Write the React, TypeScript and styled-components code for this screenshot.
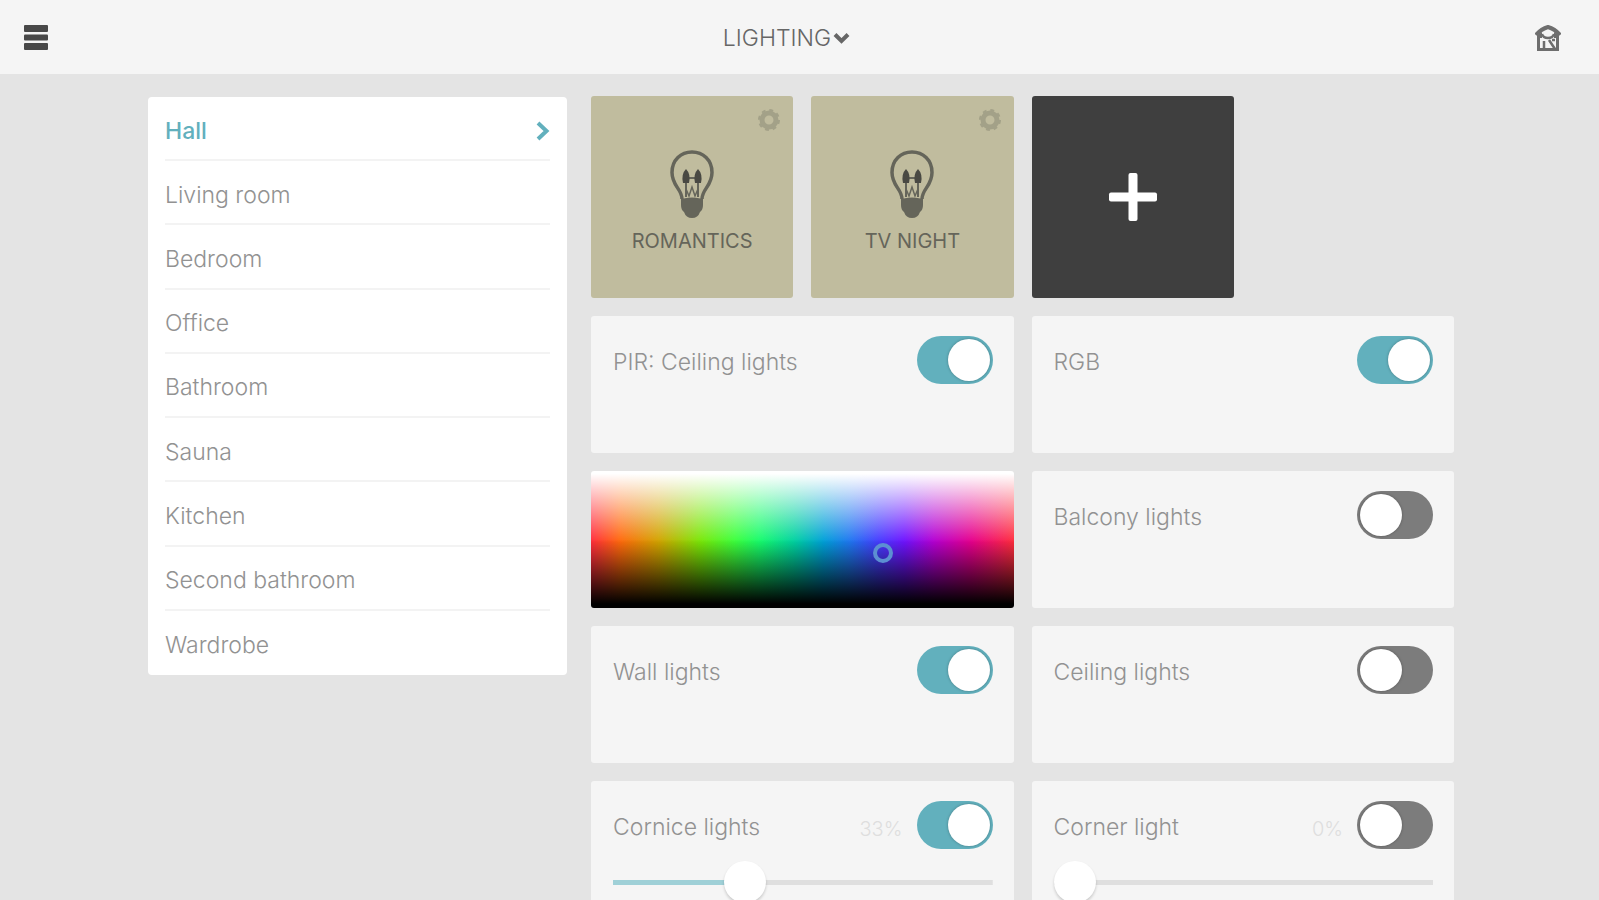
import React, { useState } from "react";
import styled, { createGlobalStyle } from "styled-components";

const GlobalStyle = createGlobalStyle`
  *, *::before, *::after { box-sizing: border-box; }
  body {
    margin: 0;
    background: #e4e4e4;
    color: #929292;
    font: 300 23px/28px Inter, "Liberation Sans", sans-serif;
  }
  button, input { font: inherit; color: inherit; }
`;

const Header = styled.header`
  display: grid;
  grid-template-columns: 1fr auto 1fr;
  align-items: center;
  height: 74px;
  padding: 2px 38px 0 24px;
  background: #f5f5f5;
  color: #555;
`;

const PlainButton = styled.button`
  display: flex;
  align-items: center;
  gap: 2px;
  padding: 0;
  border: 0;
  background: none;
  cursor: pointer;

  svg { display: block; }
`;

const HomeButton = styled(PlainButton)`
  justify-self: end;
`;

const TitleButton = styled(PlainButton)`
  margin-right: 12px;
  color: #666;
`;

const Content = styled.div`
  display: grid;
  grid-template-columns: 419fr 863fr;
  gap: 24px;
  align-items: start;
  padding: 22px 145px 20px 148px;
`;

const RoomList = styled.nav`
  display: grid;
  grid-auto-rows: 1fr;
  min-height: 578px;
  margin-top: 1px;
  padding: 0 17px;
  border-radius: 4px;
  background: #fff;
`;

const RoomLink = styled.a<{ $active: boolean }>`
  display: flex;
  align-items: center;
  justify-content: space-between;
  padding-top: 5px;
  color: ${(p) => (p.$active ? "#62b0bd" : "#929292")};
  font-weight: ${(p) => (p.$active ? 500 : 300)};
  text-decoration: none;

  &:not(:last-child) { border-bottom: 2px solid #f3f3f3; }
`;

const Board = styled.main`
  display: grid;
  grid-template-columns: repeat(4, 1fr);
  gap: 18px;
`;

const SceneTile = styled.section`
  position: relative;
  display: flex;
  aspect-ratio: 1;
  border-radius: 3px;
  background: #c0bc9e;
  color: #65655a;
`;

const SceneButton = styled.button`
  display: flex;
  flex: 1;
  flex-direction: column;
  align-items: center;
  gap: 8px;
  padding: 53px 0 0;
  border: 0;
  background: none;
  font-size: 20px;
  font-weight: 400;
  cursor: pointer;
`;

const SceneSettings = styled(PlainButton)`
  position: absolute;
  top: 12px;
  right: 12px;
  color: #a3a188;
`;

const AddTile = styled.button`
  display: flex;
  align-items: center;
  justify-content: center;
  aspect-ratio: 1;
  padding: 0;
  border: 0;
  border-radius: 3px;
  background: #3f3f3f;
  color: #fff;
  cursor: pointer;
`;

const Card = styled.section`
  grid-column: span 2;
  min-height: 137px;
  padding: 20px 21px 15px 22px;
  border-radius: 3px;
  background: #f5f5f5;
`;

const CardHead = styled.label`
  display: flex;
  align-items: center;
  cursor: pointer;
`;

const CardTitle = styled.span`
  flex: 1;
  padding-top: 4px;
`;

const Level = styled.output`
  padding: 8px 14px 0 0;
  color: #dedede;
  font-size: 20px;
`;

const Switch = styled.input`
  appearance: none;
  display: flex;
  width: 76px;
  height: 48px;
  margin: 0;
  padding: 3px;
  border-radius: 24px;
  background: #7c7c7c;
  cursor: pointer;

  &::before {
    content: "";
    width: 42px;
    height: 42px;
    border-radius: 50%;
    background: #fff;
    box-shadow: 0 0 3px rgba(0, 0, 0, 0.3);
  }

  &:checked {
    justify-content: flex-end;
    background: #62b0bd;
  }
`;

const Slider = styled.input`
  appearance: none;
  display: block;
  width: 100%;
  height: 42px;
  margin: 12px 0 0;
  background: linear-gradient(#9fd0d7, #9fd0d7) left center / var(--level) 5px no-repeat,
    linear-gradient(#dfdfdf, #dfdfdf) center / 100% 5px no-repeat;
  cursor: pointer;

  &::-webkit-slider-thumb {
    appearance: none;
    width: 42px;
    height: 42px;
    border-radius: 50%;
    background: #fff;
    box-shadow: 0 2px 3px rgba(0, 0, 0, 0.18);
  }
`;

const ColorField = styled.div`
  position: relative;
  grid-column: span 2;
  min-height: 137px;
  border-radius: 3px;
  background:
    linear-gradient(#fff 2%, rgba(255, 255, 255, 0) 52%),
    linear-gradient(transparent 50%, #000 97%),
    linear-gradient(
      90deg,
      #ff2d3c 0%, #ff6a0c 7%, #d2a400 16%, #78e808 26%, #3cff3c 34%, #16fb6c 40%,
      #00d2a0 48%, #00a0d8 55%, #1e78f0 61%, #463cff 68%, #6e14ff 74%,
      #b400d2 81%, #e6008c 90%, #ff2d3c 100%
    );
`;

const ColorMarker = styled.span`
  position: absolute;
  width: 20px;
  height: 20px;
  border: 4px solid #5c8fd2;
  border-radius: 50%;
  transform: translate(-50%, -50%);
`;

const MenuIcon = () => (
  <svg width="24" height="26" viewBox="0 0 24 26" fill="#484848" aria-hidden="true">
    <rect y="0" width="24" height="7" rx="1" />
    <rect y="9.500" width="24" height="6" rx="1" />
    <rect y="18" width="24" height="7" rx="1" />
  </svg>
);

const CaretIcon = () => (
  <svg width="17" height="12" viewBox="0 0 17 12" fill="none" stroke="currentColor" strokeWidth="4" aria-hidden="true">
    <path d="M2 2.5 8.5 9 15 2.5" />
  </svg>
);

const HomeIcon = () => (
  <svg width="26" height="28" viewBox="0 0 26 28" fill="none" stroke="#6e6e6e" strokeWidth="3" aria-hidden="true">
    <path d="M1 11 Q6 5 13 3 Q20 5 25 11" strokeWidth="4" />
    <path d="M3.500 11V25.500H22.500V11" />
    <path d="M4 10 7 8V14H4ZM22 10 19 8V14H22Z" fill="#6e6e6e" stroke="none" />
    <path d="M7 10Q8 14 13 14T19 10" strokeWidth="2.500" />
    <path d="M9 25V17M14 16L20 25M17 16H20" strokeWidth="2.500" />
  </svg>
);

const ArrowIcon = () => (
  <svg width="14" height="22" viewBox="0 0 14 22" fill="none" stroke="currentColor" strokeWidth="4" aria-hidden="true">
    <path d="M2 3 10.500 11 2 19" />
  </svg>
);

const GearIcon = () => (
  <svg width="24" height="24" viewBox="0 0 24 24" fill="none" stroke="currentColor" aria-hidden="true">
    <circle cx="12" cy="12" r="7" strokeWidth="5" />
    <circle cx="12" cy="12" r="10" strokeWidth="2" strokeDasharray="3.93 3.93" />
  </svg>
);

const BulbIcon = () => (
  <svg width="46" height="70" viewBox="0 0 46 70" fill="none" stroke="currentColor" aria-hidden="true">
    <path
      d="M13 50C13 40 3 37 3 23.500C3 11 12 3 23 3S43 11 43 23.500C43 37 33 40 33 50"
      strokeWidth="3.500"
    />
    <path d="M12 50Q23 47 34 50V56Q34 61 31 63Q29 69 23 69T15 63Q12 61 12 56Z" fill="currentColor" stroke="none" />
    <path d="M17 48V34M29 48V34M17 29H29" strokeWidth="2" />
    <path d="M17 20Q22 25 20 34H14Q12 25 17 20ZM29 20Q34 25 32 34H26Q24 25 29 20Z" fill="#494943" stroke="none" />
    <path d="M17 40L20 47L23 38L26 47L29 40" strokeWidth="1.500" />
  </svg>
);

const PlusIcon = () => (
  <svg width="50" height="50" viewBox="0 0 50 50" fill="currentColor" aria-hidden="true">
    <rect x="20.500" y="1" width="9" height="48" rx="2" />
    <rect x="1" y="20.500" width="48" height="9" rx="2" />
  </svg>
);

const rooms = [
  "Hall", "Living room", "Bedroom", "Office", "Bathroom",
  "Sauna", "Kitchen", "Second bathroom", "Wardrobe",
];

const scenes = ["ROMANTICS", "TV NIGHT"];

interface LightProps {
  name: string;
  on?: boolean;
  level?: number;
}

function LightCard({ name, on = false, level }: LightProps) {
  const [checked, setChecked] = useState(on);
  const [value, setValue] = useState(level ?? 0);
  return (
    <Card>
      <CardHead>
        <CardTitle>{name}</CardTitle>
        {level !== undefined && <Level>{value}%</Level>}
        <Switch type="checkbox" checked={checked} onChange={(e) => setChecked(e.target.checked)} />
      </CardHead>
      {level !== undefined && (
        <Slider
          type="range"
          min={0}
          max={100}
          value={value}
          aria-label={`${name} level`}
          onChange={(e) => setValue(Number(e.target.value))}
          style={{ "--level": `${value}%` } as React.CSSProperties}
        />
      )}
    </Card>
  );
}

export default function App() {
  const [room, setRoom] = useState("Hall");
  return (
    <>
      <GlobalStyle />
      <Header>
        <PlainButton aria-label="Menu"><MenuIcon /></PlainButton>
        <TitleButton>LIGHTING<CaretIcon /></TitleButton>
        <HomeButton aria-label="Home"><HomeIcon /></HomeButton>
      </Header>
      <Content>
        <RoomList>
          {rooms.map((name) => (
            <RoomLink key={name} href="#" $active={name === room} onClick={() => setRoom(name)}>
              {name}
              {name === room && <ArrowIcon />}
            </RoomLink>
          ))}
        </RoomList>
        <Board>
          {scenes.map((name) => (
            <SceneTile key={name}>
              <SceneButton><BulbIcon />{name}</SceneButton>
              <SceneSettings aria-label={`${name} settings`}><GearIcon /></SceneSettings>
            </SceneTile>
          ))}
          <AddTile aria-label="Add scene"><PlusIcon /></AddTile>
          <LightCard name="PIR: Ceiling lights" on />
          <LightCard name="RGB" on />
          <ColorField>
            <ColorMarker style={{ left: "69%", top: "60%" }} />
          </ColorField>
          <LightCard name="Balcony lights" />
          <LightCard name="Wall lights" on />
          <LightCard name="Ceiling lights" />
          <LightCard name="Cornice lights" on level={33} />
          <LightCard name="Corner light" level={0} />
        </Board>
      </Content>
    </>
  );
}
